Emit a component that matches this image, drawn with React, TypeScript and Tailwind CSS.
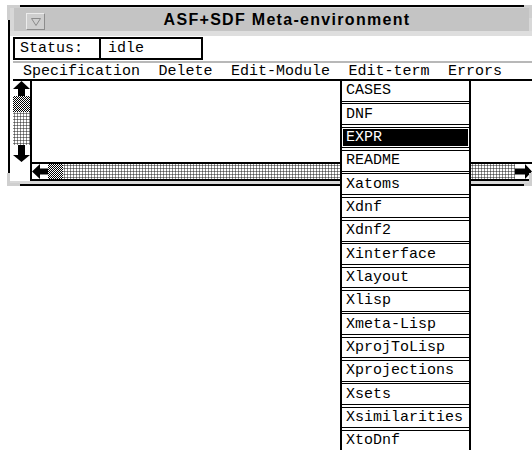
import React from "react";

const terms = [
  "CASES",
  "DNF",
  "EXPR",
  "README",
  "Xatoms",
  "Xdnf",
  "Xdnf2",
  "Xinterface",
  "Xlayout",
  "Xlisp",
  "Xmeta-Lisp",
  "XprojToLisp",
  "Xprojections",
  "Xsets",
  "Xsimilarities",
  "XtoDnf",
];

const menus = ["Specification", "Delete", "Edit-Module", "Edit-term", "Errors"];

// 50% checker used for scrollbar thumbs
const dark =
  "bg-[repeating-conic-gradient(#000_0%_25%,#fff_0%_50%)] bg-[length:2px_2px]";
// sparse dot pattern used for scrollbar troughs
const light =
  "bg-white bg-[radial-gradient(circle,#555_0.9px,transparent_1.2px)] bg-[length:3px_3px]";

function UpArrow() {
  return (
    <svg width="17" height="15" viewBox="0 0 17 15" className="block">
      <polygon points="8.5,0 17,8 12,8 12,15 5,15 5,8 0,8" fill="#000" />
    </svg>
  );
}

function DownArrow() {
  return (
    <svg width="17" height="17" viewBox="0 0 17 17" className="block">
      <polygon points="5,0 12,0 12,10 17,10 8.5,17 0,10 5,10" fill="#000" />
    </svg>
  );
}

function LeftArrow() {
  return (
    <svg width="16" height="15" viewBox="0 0 16 15" className="block shrink-0">
      <polygon points="0,7.5 8,0 8,4.5 16,4.5 16,10.5 8,10.5 8,15" fill="#000" />
    </svg>
  );
}

function RightArrow() {
  return (
    <svg width="17" height="15" viewBox="0 0 17 15" className="block shrink-0">
      <polygon points="0,4.5 10,4.5 10,0 17,7.5 10,15 10,10.5 0,10.5" fill="#000" />
    </svg>
  );
}

export default function App() {
  return (
    <div className="relative w-[532px] h-[450px] overflow-hidden bg-white text-black font-['Liberation_Mono','Courier_New',monospace] text-[15px] leading-none">
      {/* window frame */}
      <div className="relative ml-[8px] mt-[5px] w-[524px] border-l-2 border-t-2 border-b-2 border-black bg-[#d8d8d8] pt-[1px] pb-[3px]">
        {/* resize corners */}
        <div className="absolute -left-[3px] -top-[2px] w-[13px] h-[15px] border-l-[3px] border-t-[3px] border-[#cfcfcf]" />
        <div className="absolute -left-[3px] -bottom-[2px] w-[13px] h-[13px] border-l-[3px] border-b-[3px] border-[#cfcfcf]" />
        <div className="absolute right-0 -top-[2px] w-[8px] h-[13px] border-r-[3px] border-t-[3px] border-[#cfcfcf]" />
        <div className="absolute right-0 -bottom-[2px] w-[8px] h-[13px] border-r-[3px] border-b-[3px] border-[#cfcfcf]" />

        {/* title bar */}
        <div className="ml-[4px] mr-[3px] h-[23px] bg-[#c4c4c4] flex items-start">
          <div className="ml-[12px] mt-[5px] w-[19px] h-[17px] bg-[#cecece] border border-t-[#ececec] border-l-[#ececec] border-r-[#8c8c8c] border-b-[#8c8c8c] flex items-center justify-center">
            <svg width="10" height="8" viewBox="0 0 10 8" className="block">
              <polygon points="0.5,0.5 9.5,0.5 5,7.5" fill="none" stroke="#8a8a8a" strokeWidth="1" />
            </svg>
          </div>
          <div className="flex-1 text-center font-['Liberation_Sans',Arial,sans-serif] font-bold text-[16px] tracking-[1.3px] leading-[23px]">
            ASF+SDF Meta-environment
          </div>
        </div>
        <div className="h-[5px] bg-[#dedede]" />

        {/* client area */}
        <div className="bg-white pt-[1px]">
          <div className="ml-[3px] flex h-[23px]">
            <div className="w-[88px] border-2 border-black pl-[5px] flex items-center">Status:</div>
            <div className="w-[102px] border-2 border-l-0 border-black pl-[7px] flex items-center">idle</div>
          </div>

          <div className="ml-[3px] mt-[1px] h-[20px] border-t-2 border-b-2 border-t-[#b8b8b8] border-b-black flex items-center pl-[10px] gap-[18.5px]">
            {menus.map((m) => (
              <span key={m}>{m}</span>
            ))}
          </div>

          {/* text pane with scrollbars */}
          <div className="ml-[3px] flex flex-col">
            <div className="flex h-[81px]">
              <div className="w-[19px] border-r-2 border-black flex flex-col">
                <UpArrow />
                <div className={`h-[16px] ${dark}`} />
                <div className={`h-[33px] ${light}`} />
                <DownArrow />
              </div>
              <div className="flex-1" />
            </div>
            <div className="flex h-[19px]">
              <div className="w-[17px]" />
              <div className="flex-1 border-2 border-r-0 border-black flex">
                <LeftArrow />
                <div className={`w-[15px] ${dark}`} />
                <div className={`flex-1 ${light}`} />
                <RightArrow />
              </div>
            </div>
          </div>
        </div>
      </div>

      {/* Edit-term pull-down */}
      <div className="absolute left-[340px] top-[80px] w-[131px] border-x-2 border-black bg-white flex flex-col gap-[1.5px]">
        {terms.map((t) =>
          t === "EXPR" ? (
            <div
              key={t}
              className="h-[21.833px] shrink-0 border-y border-black bg-black text-white shadow-[inset_0_0_0_1px_#fff] flex items-center pl-[4px]"
            >
              {t}
            </div>
          ) : (
            <div key={t} className="h-[21.833px] shrink-0 border-y border-black flex items-center pl-[4px]">
              {t}
            </div>
          )
        )}
      </div>
    </div>
  );
}
